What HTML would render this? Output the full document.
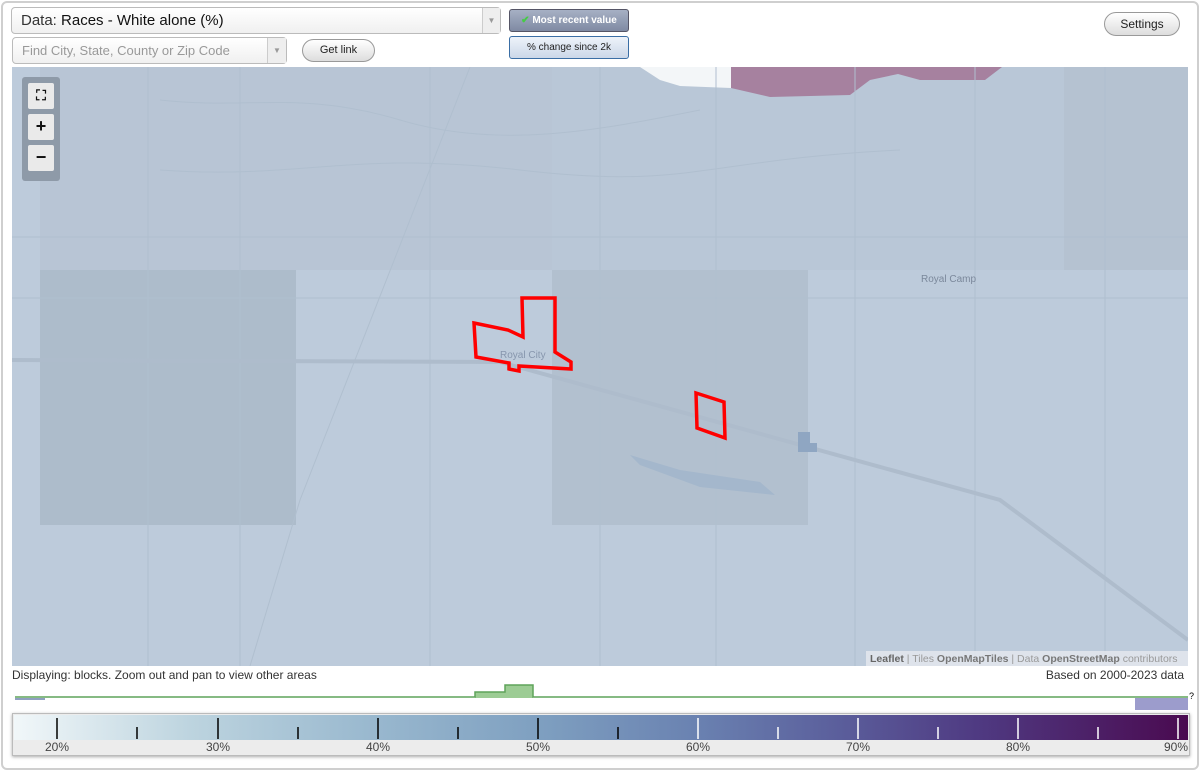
<!DOCTYPE html>
<html><head><meta charset="utf-8"><style>
*{box-sizing:border-box;margin:0;padding:0}
body{width:1200px;height:771px;background:#fff;font-family:"Liberation Sans",sans-serif;position:relative;overflow:hidden}
.frame{position:absolute;left:1px;top:1px;width:1198px;height:769px;border:2px solid #cfcfcf;border-radius:6px}
.sel{position:absolute;border:1px solid #bbb;border-radius:4px;background:linear-gradient(#fff,#f0f0f0);font-size:15px;color:#333}
.arr{position:absolute;right:0;top:0;bottom:0;width:18px;border-left:1px solid #ccc;background:#eee;color:#999;font-size:8px;text-align:center}
.btn{position:absolute;border:1px solid #999;border-radius:12px;background:linear-gradient(#fff,#ddd);font-size:11px;text-align:center;color:#222}
.tbtn{position:absolute;border:1px solid #3a6ea5;border-radius:3px;font-size:10px;text-align:center}
.zc{position:absolute;left:22px;top:77px;width:38px;height:104px;background:#8e9aa8;border-radius:3px}
.zb{position:absolute;left:6px;width:26px;height:26px;background:#eaeaea;border-radius:2px;text-align:center;font-weight:bold;font-size:18px;line-height:25px;color:#111}
</style></head><body>
<div class="frame"></div>
<div class="sel" style="left:11px;top:7px;width:490px;height:27px;padding:4px 0 0 9px">Data: <span style="color:#111">Races - White alone (%)</span><div class="arr" style="line-height:26px">▼</div></div>
<div class="sel" style="left:12px;top:37px;width:275px;height:27px;padding:5px 0 0 9px;font-size:13px;color:#999">Find City, State, County or Zip Code<div class="arr" style="line-height:26px;width:19px">▼</div></div>
<div class="btn" style="left:302px;top:39px;width:73px;height:23px;line-height:21px">Get link</div>
<div class="tbtn" style="left:509px;top:9px;width:120px;height:23px;line-height:21px;background:linear-gradient(#a6b0c4,#7f8aa3);color:#fff;font-weight:bold;border-color:#556"><span style="color:#4c4">✔</span> Most recent value</div>
<div class="tbtn" style="left:509px;top:36px;width:120px;height:23px;line-height:21px;background:linear-gradient(#eef3fa,#cbd7e8);color:#222">% change since 2k</div>
<div class="btn" style="left:1104px;top:12px;width:76px;height:24px;line-height:22px;font-size:12px">Settings</div>

<svg style="position:absolute;left:12px;top:67px" width="1176" height="599" viewBox="12 67 1176 599">
<rect x="12" y="67" width="1176" height="599" fill="#bdcbdb"/>
<rect x="40" y="67" width="512" height="203" fill="#b8c5d5"/>
<rect x="552" y="67" width="512" height="203" fill="#b9c7d7"/>
<rect x="1064" y="67" width="124" height="203" fill="#b5c2d1"/>
<rect x="40" y="270" width="256" height="255" fill="#adbccb"/>
<rect x="552" y="270" width="256" height="255" fill="#b2c0cf"/>
<polygon points="640,67 731,67 731,88 680,86 660,80" fill="#f3f6f8"/>
<polygon points="731,67 1002,67 985,80 920,80 898,74 870,80 850,95 770,97 731,88" fill="#a6819f"/>
<g stroke="#b0bfcf" stroke-width="1" fill="none">
<path d="M12,237 H1188 M12,298 H1188 M148,67 V666 M240,67 V666 M430,67 V666 M600,67 V666 M716,67 V666 M855,67 V666 M975,67 V666 M1105,67 V666"/>
<path d="M160,100 C250,110 300,90 400,120 S600,130 700,110 M160,170 C300,180 350,150 520,170 S700,160 900,150"/>
<path d="M470,67 L300,500 L250,666"/>
</g>
<path d="M12,360 L500,362 L1000,500 L1188,640" stroke="#aebccc" stroke-width="4" fill="none"/>
<path d="M630,455 L680,470 L760,482 L775,495 L700,487 L640,465Z" fill="#a4b7cc"/>
<path d="M798,432 H810 V443 H817 V452 H798Z" fill="#8fa6c2"/>
<g fill="none" stroke="#f00" stroke-width="3.5" stroke-linejoin="miter">
<polygon points="474,323 508,330 523,337 522,298 555,298 555,352 571,362 571,369 519,366 519,371 509,369 509,363 476,357"/>
<polygon points="696,393 724,402 725,438 697,428"/>
</g>
<text x="500" y="358" font-size="10" fill="#8796ad" font-family="Liberation Sans">Royal City</text>
<text x="921" y="282" font-size="10" fill="#7b889b" font-family="Liberation Sans">Royal Camp</text>
<rect x="866" y="651" width="322" height="15" fill="#e4e8ed" opacity=".85"/>
<text x="870" y="662" font-size="10.5" fill="#999" font-family="Liberation Sans"><tspan font-weight="bold" fill="#666">Leaflet</tspan> | Tiles <tspan font-weight="bold" fill="#777">OpenMapTiles</tspan> | Data <tspan font-weight="bold" fill="#777">OpenStreetMap</tspan> contributors</text>
</svg>
<div class="zc"><div class="zb" style="top:6px;font-size:14px">⛶</div><div class="zb" style="top:37px">+</div><div class="zb" style="top:68px">−</div></div>

<div style="position:absolute;left:12px;top:668px;font-size:12px;color:#333">Displaying: blocks. Zoom out and pan to view other areas</div>
<div style="position:absolute;right:16px;top:668px;font-size:12px;color:#333">Based on 2000-2023 data</div>

<svg style="position:absolute;left:0;top:680px" width="1200" height="35">
<rect x="15" y="18" width="30" height="2" fill="#8fa0c0"/>
<rect x="475" y="12" width="30" height="6" fill="#9ccc94"/>
<rect x="505" y="5" width="28" height="13" fill="#9ccc94"/>
<path d="M15,17 H475 V12 H505 V5 H533 V17 H1188" stroke="#5ea35a" stroke-width="1.5" fill="none"/>
<rect x="1135" y="18" width="53" height="12" fill="#9c9ccc"/>
<text x="1189" y="19" font-size="9" fill="#000" font-family="Liberation Sans">?</text>
</svg>

<div style="position:absolute;left:12px;top:713px;width:1178px;height:43px;border:1px solid #bbb;background:#ececec;box-shadow:0 1px 3px #aaa">
<div style="position:absolute;left:1px;top:1px;right:1px;height:25px;background:linear-gradient(to right,#f1f7f9 0%,#bdd4df 15%,#9ab9cf 30%,#7e9fc0 45%,#6a82b1 58%,#5b5f9c 70%,#4f3a82 82%,#4a0a50 100%)"></div>
</div>
<svg style="position:absolute;left:0;top:713px" width="1200" height="45">
<g stroke-width="1.5">
<path d="M57,5V26M218,5V26M378,5V26M538,5V26" stroke="#000"/>
<path d="M137,14V26M298,14V26M458,14V26M618,14V26" stroke="#000"/>
<path d="M698,5V26M858,5V26M1018,5V26M1178,5V26" stroke="#fff"/>
<path d="M778,14V26M938,14V26M1098,14V26" stroke="#fff"/>
</g>
<g font-size="12" fill="#444" font-family="Liberation Sans" text-anchor="middle">
<text x="57" y="38">20%</text><text x="218" y="38">30%</text><text x="378" y="38">40%</text><text x="538" y="38">50%</text><text x="698" y="38">60%</text><text x="858" y="38">70%</text><text x="1018" y="38">80%</text><text x="1176" y="38">90%</text>
</g>
</svg>
</body></html>
